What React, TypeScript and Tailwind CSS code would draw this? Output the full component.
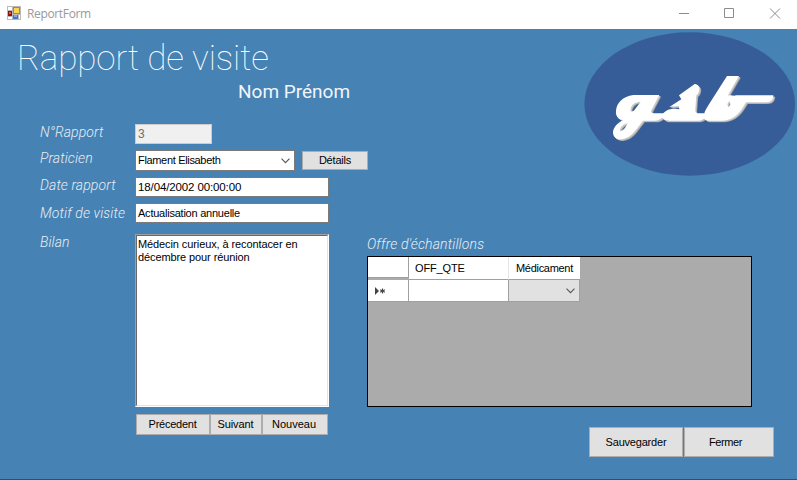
import type { ReactNode } from 'react';

const label = "font-['Roboto',sans-serif] text-[14px] italic font-light tracking-[0.1px] leading-[18px] text-[#e8eef5] whitespace-nowrap w-[95px] shrink-0";
const field = 'h-5 w-[194px] border border-[#7a7a7a] bg-white pl-[2px] leading-[18px] whitespace-nowrap';

function Btn({ className, children }: { className: string; children: ReactNode }) {
  return (
    <button className={`flex shrink-0 items-center justify-center border border-[#adadad] bg-[#e1e1e1] text-[11px] leading-none whitespace-nowrap ${className}`}>
      {children}
    </button>
  );
}

function Chevron() {
  return (
    <svg width="9" height="6" viewBox="0 0 9 6" fill="none" stroke="#555" strokeWidth="1.1">
      <path d="M.5.7 4.5 4.7 8.5.7" />
    </svg>
  );
}

function Logo() {
  const letters = (
    <>
      <path
        fillRule="evenodd"
        d="M178 75H100C68 80 50 98 48 122C46 138 56 149 70 150C50 160 39 174 39 188C40 202 50 209 65 208C85 205 97 193 105 183L129 152H163C174 152 180 149 188 142L192 130H166C154 130 151 127 154 121ZM122 95L105 118C98 128 89 126 92 116C95 104 104 96 122 95ZM83 160C77 175 68 183 60 184C58 174 68 162 83 160Z"
      />
      <path d="M284 42L237 76L244 88L208 111L236 108L238 118C225 114 203 116 193 127C184 135 184 142 192 148C197 152 202 152 210 152H292C305 152 311 146 319 140L318 130H298C288 130 285 126 286 116L289 76C296 72 298 63 298 54C296 46 290 42 284 42Z" />
      <path d="M381 18H417L383 77C394 74 402 79 408 76H520C520 88 513 97 499 97H438C430 110 423 124 411 134C399 145 384 151 368 152H330C315 152 310 146 312 135C314 123 320 114 327 103ZM389 93C382 99 380 106 386 112L391 103Z" fillRule="evenodd" />
    </>
  );
  return (
    <svg className="mt-[3px] shrink-0" width="213" height="146" viewBox="584 32 213 146">
      <ellipse cx="689.7" cy="104" rx="105.3" ry="71.7" fill="#375d98" />
      <g fill="#9c9c9c" transform="translate(601.900 71.700) scale(.33333)">{letters}</g>
      <g fill="#c9c9c9" transform="translate(601.200 71.100) scale(.33333)">{letters}</g>
      <g fill="#fff" transform="translate(600 70) scale(.33333)">{letters}</g>
    </svg>
  );
}

function TitleBar() {
  return (
    <div className="flex h-[29px] shrink-0 items-center bg-white pl-[7px] pr-[16px] text-[#999]">
      <svg width="14" height="14" viewBox="0 0 14 14" className="-mt-[3px]">
        <path d="M0 0H14V14H0Z" fill="#b9b9b9" />
        <path d="M1 1H5V4H1ZM1 11H5V13H1ZM12 9H13V13H12Z" fill="#fff" />
        <path d="M6 1H13V8H6Z" fill="#b98a08" />
        <path d="M7 2H12V7H7Z" fill="#ffd34e" />
        <path d="M1 5H5V10H1Z" fill="#8f1111" />
        <path d="M2 6H4V8H2Z" fill="#e4573f" />
        <path d="M6 9H11V13H6Z" fill="#3f73d8" />
        <path d="M7 9H10V11H7Z" fill="#7fa9f5" />
      </svg>
      <span className="-mt-[2px] ml-[6px] flex-1 font-['Open_Sans',sans-serif] text-[12px] tracking-[-0.35px] leading-[16px]">ReportForm</span>
      <svg width="102" height="11" viewBox="0 0 102 11" className="-mt-[3px]" fill="none" stroke="#8c8c8c">
        <path d="M0 5.5H10M45.5.5H54.5V9.5H45.5ZM91 .5 101 10.500M101 .5 91 10.500" />
      </svg>
    </div>
  );
}

export default function App() {
  return (
    <div className="flex h-[480px] w-[797px] flex-col overflow-hidden border-b border-[#3f4a5a] bg-[#4682b4] font-['Liberation_Sans',sans-serif] text-[11px] text-black">
      <TitleBar />
      <div className="flex h-[205px] shrink-0">
        <div className="w-[584px]">
          <h1 className="ml-[17px] mt-[8px] h-[44px] whitespace-nowrap font-['Roboto',sans-serif] text-[35px] font-thin leading-[44px] tracking-[-0.1px] text-white">Rapport de visite</h1>
          <p className="ml-[238px] h-[24px] -mt-[1px] whitespace-nowrap font-['Roboto',sans-serif] text-[19px] leading-[24px] text-[#f2f5f9]">Nom Prénom</p>
          <div className="ml-10 mt-5">
            <div className="flex h-[26px]">
              <span className={`-mt-px ${label}`}>N°Rapport</span>
              <div className="h-5 w-[77px] border border-[#ccc] bg-[#f0f0f0] pl-[2px] text-[12px] leading-[18px] text-[#6d6d6d]">3</div>
            </div>
            <div className="flex h-[27px]">
              <span className={`-mt-px ${label}`}>Praticien</span>
              <div className="flex h-[21px] w-[160px] items-center justify-between border border-[#7a7a7a] bg-white pl-[2px] pr-1 leading-none">
                <span className="tracking-[-0.33px]">Flament Elisabeth</span>
                <Chevron />
              </div>
              <Btn className="ml-[7px] mt-px h-[19px] w-[66px] tracking-[-0.2px]">Détails</Btn>
            </div>
            <div className="flex h-[26px]">
              <span className={`-mt-px ${label}`}>Date rapport</span>
              <div className={`${field} text-[11.5px] tracking-[-0.12px]`}>18/04/2002 00:00:00</div>
            </div>
            <div className="flex h-[26px]">
              <span className={`mt-px ${label}`}>Motif de visite</span>
              <div className={`${field} tracking-[-0.23px]`}>Actualisation annuelle</div>
            </div>
          </div>
        </div>
        <Logo />
      </div>
      <div className="flex shrink-0 pl-10">
        <span className={`-mt-px ${label}`}>Bilan</span>
        <div className="w-[194px]">
          <div className="h-[173px] border border-b-white border-l-[#a0a0a0] border-r-white border-t-[#a0a0a0] bg-white">
            <div className="h-full border border-b-[#e3e3e3] border-l-[#696969] border-r-[#e3e3e3] border-t-[#696969] pl-px pt-[2px] leading-[13px]">
              <p className="whitespace-nowrap tracking-[-0.1px]">Médecin curieux, à recontacer en</p>
              <p className="whitespace-nowrap tracking-[-0.1px]">décembre pour réunion</p>
            </div>
          </div>
          <div className="mt-[7px] flex pl-px">
            <Btn className="h-[21px] w-[74px] tracking-[-0.25px] pr-px">Précedent</Btn>
            <Btn className="h-[21px] w-[52px] tracking-[-0.1px] pr-px">Suivant</Btn>
            <Btn className="h-[21px] w-[66px] pr-[2px]">Nouveau</Btn>
          </div>
        </div>
        <div className="ml-[38px] w-[407px]">
          <span className="mt-px block h-[21px] whitespace-nowrap font-['Roboto',sans-serif] text-[14px] font-light italic leading-[18px] tracking-[0.15px] text-[#e8eef5]">Offre d'échantillons</span>
          <div className="h-[151px] w-[385px] border border-black bg-[#ababab]">
            <div className="grid w-[212px] grid-cols-[41px_100px_71px] leading-[22px]">
              <div className="h-[21px] border-b border-r border-[#a0a0a0] bg-white" />
              <div className="border-b border-r border-b-[#a0a0a0] border-r-[#e5e5e5] bg-white pl-[6px] tracking-[-0.15px]">OFF_QTE</div>
              <div className="border-b border-b-[#a0a0a0] bg-white pl-[7px] tracking-[-0.3px]">Médicament</div>
              <div className="flex h-[22px] items-center border-b border-r border-[#a0a0a0] bg-white pl-[7px]">
                <svg width="12" height="8" viewBox="0 0 12 8">
                  <path d="M0 0 4 4 0 8Z" fill="#444" />
                  <path d="M7.500 1.500V6.500M5.200 2.700 9.800 5.300M9.800 2.700 5.200 5.300" stroke="#444" strokeWidth="1.100" />
                </svg>
              </div>
              <div className="border-b border-r border-[#a0a0a0] bg-white" />
              <div className="flex items-center justify-end border-b border-r border-[#a0a0a0] bg-[#e1e1e1] pr-1"><Chevron /></div>
            </div>
          </div>
          <div className="mt-5 flex pl-[222px]">
            <Btn className="h-[30px] w-[94px] tracking-[-0.2px]">Sauvegarder</Btn>
            <Btn className="ml-px h-[30px] w-[90px] pr-[7px] tracking-[-0.4px]">Fermer</Btn>
          </div>
        </div>
      </div>
    </div>
  );
}
